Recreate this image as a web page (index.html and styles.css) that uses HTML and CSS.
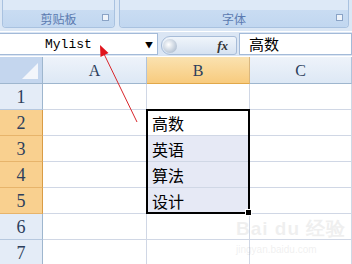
FILE: index.html
```html
<!DOCTYPE html>
<html lang="zh">
<head>
  <meta charset="UTF-8">
  <title>Mylist</title>
  <link rel="stylesheet" href="styles.css">
</head>
<body>

<div class="ribbon">
  <div class="group g-clip">
    <div class="group-top"></div>
    <div class="group-label">剪贴板<span class="launcher"></span></div>
  </div>
  <div class="group g-font">
    <div class="group-top"></div>
    <div class="group-label">字体<span class="launcher"></span></div>
  </div>
</div>

<div class="formula-bar">
  <div class="name-box">
    <span class="name">Mylist</span>
    <span class="drop">&#9660;</span>
  </div>
  <div class="pill">
    <span class="knob"></span>
    <span class="fx">fx</span>
  </div>
  <div class="formula">高数</div>
</div>

<div class="sheet">
  <div class="corner"><span class="tri"></span></div>
  <div class="col-h">A</div>
  <div class="col-h on">B</div>
  <div class="col-h">C</div>

  <div class="row-h">1</div><div class="cell"></div><div class="cell"></div><div class="cell"></div>
  <div class="row-h on">2</div><div class="cell"></div><div class="cell txt">高数</div><div class="cell"></div>
  <div class="row-h on">3</div><div class="cell"></div><div class="cell txt fill">英语</div><div class="cell"></div>
  <div class="row-h on">4</div><div class="cell"></div><div class="cell txt fill">算法</div><div class="cell"></div>
  <div class="row-h on">5</div><div class="cell"></div><div class="cell txt fill">设计</div><div class="cell"></div>
  <div class="row-h">6</div><div class="cell"></div><div class="cell"></div><div class="cell"></div>
  <div class="row-h">7</div><div class="cell"></div><div class="cell"></div><div class="cell"></div>

  <div class="sel"><span class="handle"></span></div>
</div>

<div class="watermark">
  <div class="wm-big">Bai du 经验</div>
  <div class="wm-small">jingyan.baidu.com</div>
</div>

<svg class="arrow" width="352" height="264" viewBox="0 0 352 264">
  <line x1="137" y1="122" x2="104" y2="54" stroke="#d9262b" stroke-width="1"/>
  <polygon points="100,45 108.5,53 100.5,57" fill="#e0141c"/>
</svg>

</body>
</html>
```

FILE: styles.css
```css
body { margin: 0; width: 352px; height: 264px; overflow: hidden; background: #fff; position: relative; font-family: "Noto Sans CJK SC", sans-serif; }

.ribbon { height: 31px; background: #dbe7f5; display: flex; gap: 4px; padding: 0 3px 0 2px; box-sizing: border-box; }
.group { display: flex; flex-direction: column; border: 1px solid #a9c2e0; border-top: none; border-radius: 0 0 4px 4px; height: 28px; box-sizing: border-box; overflow: hidden; }
.g-clip { width: 113px; }
.g-font { flex: 1; }
.group-top { height: 10px; background: #dde9f7; }
.group-label { flex: 1; background: linear-gradient(#c9dcf2, #c1d7f0); color: #5a7ab0; font-size: 12px; text-align: center; line-height: 17px; position: relative; }
.launcher { position: absolute; right: 5px; top: 4px; width: 5px; height: 5px; border: 1px solid #8aa3c6; background: #eef3fa; }

.formula-bar { height: 25px; background: #dbe6f4; display: flex; align-items: stretch; padding: 1px 0 1px 0; border-top: 1px solid #fff; box-sizing: border-box; }
.name-box { width: 157px; background: #fff; border: 1px solid #a3bad8; border-left: none; display: flex; align-items: center; position: relative; }
.name { font-family: "Liberation Mono", monospace; font-size: 13px; margin-left: 45px; color: #000; }
.drop { position: absolute; right: 4px; font-size: 8px; color: #000; }
.pill { width: 76px; margin: 3px 2px 0 3px; border: 1px solid #a7bcd8; border-radius: 9px 3px 3px 9px; background: linear-gradient(#f0f5fb, #d6e2f1); display: flex; align-items: center; justify-content: space-between; padding: 0 8px 0 1px; box-sizing: border-box; }
.knob { width: 14px; height: 14px; border-radius: 50%; background: radial-gradient(circle at 40% 40%, #ffffff, #b9c6d6 70%, #93a4ba); }
.fx { font-family: "Liberation Serif", serif; font-style: italic; font-size: 13px; color: #333; font-weight: bold; }
.formula { flex: 1; background: #fff; border: 1px solid #a3bad8; font-size: 15px; line-height: 20px; padding-left: 9px; color: #000; }

.sheet { margin-top: 1px; display: grid; grid-template-columns: 43px 104px 103px 1fr; grid-template-rows: 27px repeat(7, 26px); position: relative; }
.corner { background: #c4d6ee; border-right: 1px solid #9eb6ce; border-bottom: 1px solid #9eb6ce; position: relative; }
.tri { position: absolute; right: 4px; bottom: 4px; width: 0; height: 0; border-left: 16px solid transparent; border-bottom: 16px solid #f3f6fb; }
.col-h { background: linear-gradient(#eef3fa, #dde8f5); border-right: 1px solid #b0c3dc; border-bottom: 1px solid #9eb6ce; font-family: "Liberation Serif", serif; font-size: 16px; color: #2c3e5c; text-align: center; line-height: 27px; }
.col-h.on { background: linear-gradient(#fae2b0, #f8cb7e); border-bottom-color: #e1a84a; border-right-color: #d9b77f; }
.row-h { background: #e4ecf7; border-right: 1px solid #9eb6ce; border-bottom: 1px solid #b6c8df; font-family: "Liberation Serif", serif; font-size: 18px; color: #2c3e5c; text-align: center; line-height: 26px; }
.row-h.on { background: #f9d08f; border-bottom-color: #e7b46b; border-right-color: #d99c45; }
.cell { border-right: 1px solid #d0d7e5; border-bottom: 1px solid #d0d7e5; }
.txt { font-size: 16px; line-height: 26px; padding-left: 5px; color: #000; }
.fill { background: #e6e9f5; }

.sel { position: absolute; inset: -1px 0 0 -1px; grid-column: 3 / 4; grid-row: 3 / 7; border: 2px solid #000; pointer-events: none; }
.handle { position: absolute; right: -4px; bottom: -4px; width: 5px; height: 5px; background: #000; border: 1px solid #fff; }

.watermark { position: absolute; left: 236px; top: 216px; color: #000; opacity: 0.06; font-family: "Liberation Sans", sans-serif; }
.wm-big { font-size: 19px; font-weight: bold; letter-spacing: 1px; }
.wm-small { font-size: 10px; margin-top: 2px; }

.arrow { position: absolute; left: 0; top: 0; }
```
